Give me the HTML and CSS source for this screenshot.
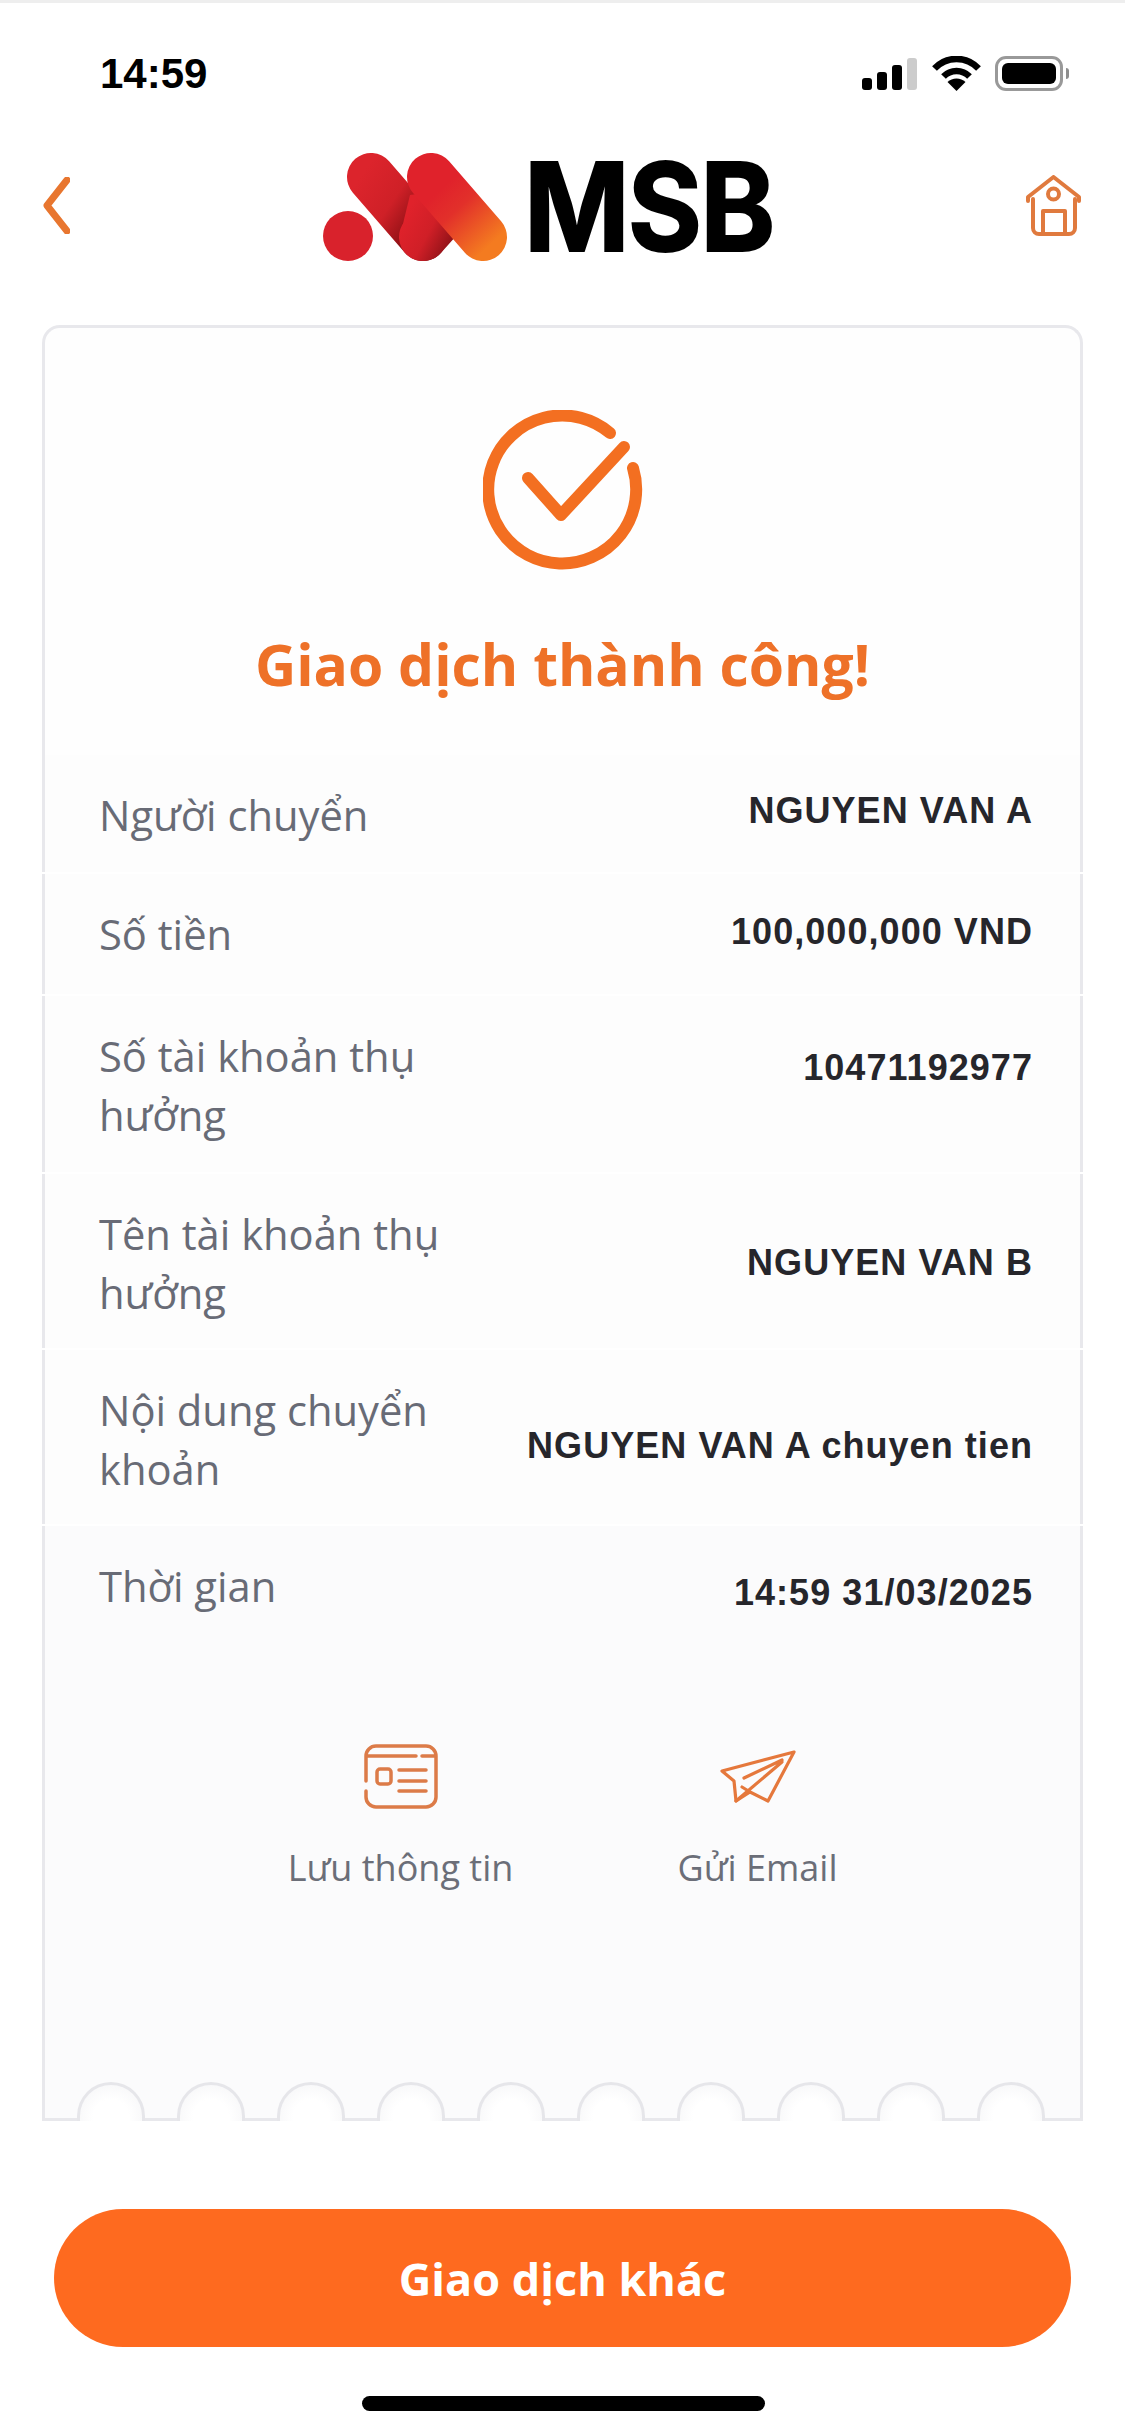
FILE: index.html
```html
<!DOCTYPE html>
<html lang="vi">
<head>
    <meta charset="UTF-8">
    <meta name="viewport" content="width=device-width, initial-scale=1.0">
    <title>Giao dịch thành công</title>
    <link rel="stylesheet" href="styles.css">
</head>
<body>
    <div class="status">
        <span class="time">14:59</span>
        <div class="status-icons">
            <div class="signal"><i class="s1"></i><i class="s2"></i><i class="s3"></i><i class="s4"></i></div>
            <svg class="wifi" width="49" height="35" viewBox="0 0 49 35">
                <path d="M2.5 12.5A30 30 0 0 1 46.500 12.500" fill="none" stroke="#000" stroke-width="6.500"/>
                <path d="M11.500 20.500A18 18 0 0 1 37.500 20.500" fill="none" stroke="#000" stroke-width="6.500"/>
                <path d="M24.500 35L15.500 26A13 13 0 0 1 33.500 26Z" fill="#000"/>
            </svg>
            <div class="battery"><div class="battery-fill"></div></div>
            <div class="battery-nub"></div>
        </div>
    </div>

    <header class="nav">
        <svg class="back" width="27" height="57" viewBox="0 0 27 57">
            <path d="M24 3L4 28.500L24 54" fill="none" stroke="#e8762f" stroke-width="7" stroke-linecap="round" stroke-linejoin="round"/>
        </svg>
        <div class="logo">
            <svg width="190" height="108" viewBox="323 153 190 108">
                <defs>
                    <linearGradient id="pillA" gradientUnits="userSpaceOnUse" x1="365" y1="170" x2="432" y2="215">
                        <stop offset="0" stop-color="#dc242c"/>
                        <stop offset=".5" stop-color="#cf2027"/>
                        <stop offset="1" stop-color="#7d0c10"/>
                    </linearGradient>
                    <linearGradient id="pillB" gradientUnits="userSpaceOnUse" x1="440" y1="190" x2="490" y2="245">
                        <stop offset="0" stop-color="#e0222b"/>
                        <stop offset=".35" stop-color="#e2302a"/>
                        <stop offset="1" stop-color="#f47b20"/>
                    </linearGradient>
                    <linearGradient id="pillC" gradientUnits="userSpaceOnUse" x1="400" y1="225" x2="446" y2="250">
                        <stop offset="0" stop-color="#e0222b"/>
                        <stop offset=".55" stop-color="#d01f27"/>
                        <stop offset="1" stop-color="#951319"/>
                    </linearGradient>
                </defs>
                <circle cx="348" cy="236" r="25" fill="#d9222c"/>
                <path d="M371 177L423 237" fill="none" stroke="url(#pillA)" stroke-width="48" stroke-linecap="round"/>
                <path d="M410 195L400 236L423 261L447 240L445 190Z" fill="url(#pillC)"/>
                <path d="M423 237L440 218" fill="none" stroke="url(#pillC)" stroke-width="48" stroke-linecap="round"/>
                <path d="M431 177L483 237" fill="none" stroke="url(#pillB)" stroke-width="48" stroke-linecap="round"/>
            </svg>
            <span class="logo-text">MSB</span>
        </div>
        <svg class="home" width="55" height="61" viewBox="0 0 55 61" fill="none" stroke="#e07a3e" stroke-width="4" stroke-linecap="round" stroke-linejoin="round">
            <path d="M2 26V22L27.500 2L53 22V26"/>
            <path d="M7 24V53A6 6 0 0 0 13 59H43A6 6 0 0 0 49 53V24"/>
            <path d="M17 58V36H39V58"/>
            <circle cx="27.500" cy="19" r="5.500"/>
        </svg>
    </header>

    <main class="card">
        <section class="hero">
            <svg width="160" height="160" viewBox="0 0 160 160" fill="none" stroke="#f36f21" stroke-width="12" stroke-linecap="round" stroke-linejoin="round">
                <path d="M127 23A74 74 0 1 0 150 58"/>
                <path d="M45 68L78 105L141 37"/>
            </svg>
            <h1>Giao dịch thành công!</h1>
        </section>

        <div class="row">
            <span class="label">Người chuyển</span>
            <span class="value up">NGUYEN VAN A</span>
        </div>
        <div class="row row-tall">
            <span class="label">Số tiền</span>
            <span class="value up2">100,000,000 VND</span>
        </div>
        <div class="row">
            <span class="label">Số tài khoản thụ hưởng</span>
            <span class="value acc">10471192977</span>
        </div>
        <div class="row row-short">
            <span class="label">Tên tài khoản thụ hưởng</span>
            <span class="value mid">NGUYEN VAN B</span>
        </div>
        <div class="row row-short">
            <span class="label">Nội dung chuyển khoản</span>
            <span class="value low">NGUYEN VAN A chuyen tien</span>
        </div>

        <section class="tail">
            <div class="row row-last">
                <span class="label">Thời gian</span>
                <span class="value down">14:59 31/03/2025</span>
            </div>
            <div class="actions">
                <div class="action">
                    <div class="action-icon">
                        <svg width="74" height="65" viewBox="0 0 74 65" fill="none" stroke="#dc7b48" stroke-width="3.500" stroke-linecap="round">
                            <path d="M2 37V12A10 10 0 0 1 12 2H62A10 10 0 0 1 72 12V53A10 10 0 0 1 62 63H12A10 10 0 0 1 2 53V47"/>
                            <path d="M3 12H52M58 12H71"/>
                            <rect x="13" y="25" width="14" height="15" rx="3"/>
                            <path d="M35 26H62M35 37H62M35 47H62"/>
                        </svg>
                    </div>
                    <span class="action-text">Lưu thông tin</span>
                </div>
                <div class="action">
                    <div class="action-icon">
                        <svg width="76" height="53" viewBox="0 0 76 53" fill="none" stroke="#e5783c" stroke-width="3.200" stroke-linecap="round" stroke-linejoin="round">
                            <path d="M74 2L2 21L14 31L16 51L30 42L48 51Z"/>
                            <path d="M24 28L62 10M16 51L62 12M30 42L22 37"/>
                        </svg>
                    </div>
                    <span class="action-text">Gửi Email</span>
                </div>
            </div>
            <div class="perf">
                <i></i><i></i><i></i><i></i><i></i><i></i><i></i><i></i><i></i><i></i>
            </div>
        </section>
    </main>

    <button class="btn">Giao dịch khác</button>
    <div class="home-bar"></div>
</body>
</html>
```

FILE: styles.css
```css
body {
    margin: 0;
    height: 2436px;
    overflow: hidden;
    background-color: #fff;
    border-top: 3px solid #eeeeee;
    box-sizing: border-box;
    font-family: "Open Sans", sans-serif;
}

/* status bar */
.status {
    display: flex;
    justify-content: space-between;
    align-items: center;
    height: 35px;
    padding: 53px 56px 0 100px;
}
.time {
    font-family: "Liberation Sans", sans-serif;
    font-weight: 700;
    font-size: 42px;
    color: #000;
}
.status-icons {
    display: flex;
    align-items: center;
}
.signal {
    display: flex;
    align-items: flex-end;
    gap: 5px;
    height: 32px;
    margin-right: 15px;
}
.signal i {
    display: block;
    width: 10px;
    border-radius: 3px;
    background-color: #000;
}
.s1 { height: 12px; }
.s2 { height: 18px; }
.s3 { height: 25px; }
.signal .s4 { height: 32px; background-color: #cccccc; }
.wifi {
    margin-right: 14px;
}
.battery {
    box-sizing: border-box;
    width: 68px;
    height: 35px;
    padding: 4px;
    border: 3px solid #999999;
    border-radius: 11px;
}
.battery-fill {
    height: 100%;
    border-radius: 6px;
    background-color: #000;
}
.battery-nub {
    width: 3px;
    height: 11px;
    margin-left: 3px;
    border-radius: 0 3px 3px 0;
    background-color: #8e8e8e;
}

/* header */
.nav {
    display: flex;
    justify-content: space-between;
    align-items: center;
    height: 108px;
    padding: 62px 44px 0 43px;
}
.back {
    margin-top: -4px;
}
.home {
    margin-top: -4px;
}
.logo {
    display: flex;
    align-items: center;
    width: 450px;
    gap: 17px;
}
.logo svg {
    flex: none;
}
.logo-text {
    margin: 0 0 0 -6px;
    font-family: Inter, sans-serif;
    font-weight: 700;
    font-size: 122px;
    line-height: 108px;
    letter-spacing: -2px;
    color: #000;
    -webkit-text-stroke: 2px #000;
    transform: scaleX(.93);
    transform-origin: left center;
    filter: blur(.7px);
}

/* card */
.card {
    display: flex;
    flex-direction: column;
    box-sizing: border-box;
    height: 1796px;
    margin: 64px 42px 0;
}
.hero {
    display: flex;
    flex-direction: column;
    align-items: center;
    box-sizing: border-box;
    height: 430px;
    padding-top: 82px;
    border: 3px solid #e8e8ec;
    border-bottom: 0;
    border-radius: 18px 18px 0 0;
    background-color: #fefefe;
}
.hero h1 {
    margin: 58px 0 0;
    font-size: 57px;
    line-height: 72px;
    font-weight: 700;
    color: #ee7128;
}
.row {
    display: flex;
    justify-content: space-between;
    align-items: flex-start;
    padding: 30px 47px 28px 54px;
    border-left: 3px solid #e8e8ec;
    border-right: 3px solid #e8e8ec;
    margin-bottom: 2px;
    background-color: #fdfdfd;
}
.row-tall {
    padding-bottom: 31px;
}
.row-short {
    padding-bottom: 26px;
}
.label {
    width: 390px;
    font-size: 41.700px;
    line-height: 59px;
    color: #686b76;
}
.value {
    font-family: "Liberation Sans", sans-serif;
    font-weight: 700;
    font-size: 36px;
    line-height: 59px;
    letter-spacing: 1.050px;
    white-space: nowrap;
    color: #26262b;
}
.up { margin-top: -4px; }
.up2 { margin-top: -2px; }
.acc { margin-top: 12px; }
.mid { margin-top: 29px; }
.low { margin-top: 36px; }
.down { margin-top: 7px; }

.tail {
    display: flex;
    flex-direction: column;
    flex: 1;
    border-left: 3px solid #e8e8ec;
    border-right: 3px solid #e8e8ec;
    background-color: #fbfbfc;
}
.row-last {
    border: 0;
    margin: 0;
    background-color: transparent;
}
.actions {
    display: flex;
    justify-content: center;
    padding: 94px 0 0 33px;
}
.action {
    display: flex;
    flex-direction: column;
    align-items: center;
    width: 357px;
}
.action-icon {
    display: flex;
    align-items: center;
    height: 65px;
}
.action-text {
    margin-top: 36px;
    font-size: 36px;
    line-height: 45px;
    color: #6b6e78;
}
.perf {
    display: flex;
    gap: 32px;
    margin-top: auto;
    height: 36px;
    padding-left: 32px;
    border-bottom: 3px solid #e8e8ec;
}
.perf i {
    display: block;
    box-sizing: border-box;
    width: 68px;
    height: 39px;
    border: 3px solid #e6e6ea;
    border-bottom: 0;
    border-radius: 34px 34px 0 0;
    background: radial-gradient(circle at 50% 90%, #ffffff 40%, #f3f3f5 100%);
}

/* bottom */
.btn {
    display: block;
    width: 1017px;
    height: 138px;
    margin: 88px 0 0 54px;
    border: 0;
    border-radius: 69px;
    background-color: #fe6a1f;
    font-family: "Open Sans", sans-serif;
    font-weight: 700;
    font-size: 45px;
    color: #fff;
}
.home-bar {
    width: 403px;
    height: 15px;
    margin: 49px 0 0 362px;
    border-radius: 8px;
    background-color: #000;
}
```
